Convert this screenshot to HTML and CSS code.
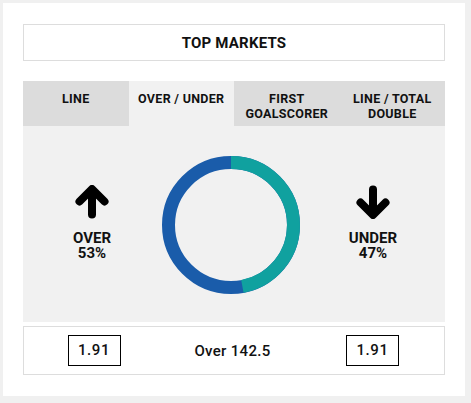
FILE: index.html
```html
<!DOCTYPE html>
<html lang="en">
<head>
  <meta charset="UTF-8" />
  <title>Top Markets</title>
  <link rel="stylesheet" href="styles.css">
</head>
<body>

  <div class="card">
    <div class="title">TOP MARKETS</div>

    <div class="tabs">
      <div class="tab">LINE</div>
      <div class="tab active">OVER / UNDER</div>
      <div class="tab">FIRST<br>GOALSCORER</div>
      <div class="tab">LINE / TOTAL<br>DOUBLE</div>
    </div>

    <div class="panel">
      <div class="side">
        <svg class="arrow" width="40" height="34" viewBox="0 0 40 34">
          <path d="M20 29.5 V8 M7.5 16.5 L20 4 L32.5 16.5" />
        </svg>
        <div class="label">OVER<br>53%</div>
      </div>

      <div class="chart">
        <svg width="138" height="138" viewBox="0 0 138 138">
          <circle cx="69" cy="69" r="62.5" fill="none" stroke="#1a5caa" stroke-width="13" />
          <!-- teal part: 47% from the top, clockwise -->
          <circle cx="69" cy="69" r="62.5" fill="none" stroke="#10a19f" stroke-width="13"
                  stroke-dasharray="184.6 400" transform="rotate(-90 69 69)" />
        </svg>
      </div>

      <div class="side">
        <svg class="arrow" width="40" height="34" viewBox="0 0 40 34">
          <path d="M20 4.5 V26 M7.5 17.5 L20 30 L32.5 17.5" />
        </svg>
        <div class="label">UNDER<br>47%</div>
      </div>
    </div>

    <div class="odds-row">
      <div class="cell"><span class="odd">1.91</span></div>
      <div class="cell line">Over 142.5</div>
      <div class="cell"><span class="odd">1.91</span></div>
    </div>
  </div>

</body>
</html>
```

FILE: styles.css
```css
body {
  margin: 0;
  background: #f0f0f0;
  font-family: Roboto, "Liberation Sans", sans-serif;
  color: #111;
}

.card {
  background: #fff;
  width: 462px;
  margin: 3px 0 0 3px;
  padding: 21px 20px 21px 20px;
  box-sizing: border-box;
}

.title {
  border: 1px solid #ddd;
  height: 37px;
  box-sizing: border-box;
  display: flex;
  align-items: center;
  justify-content: center;
  font-size: 15px;
  font-weight: 700;
  letter-spacing: 0.2px;
  margin-bottom: 20px;
}

.tabs {
  display: grid;
  grid-template-columns: repeat(4, 1fr);
  height: 45px;
}

.tab {
  background: #dcdcdc;
  text-align: center;
  font-size: 12.5px;
  font-weight: 700;
  line-height: 15px;
  padding-top: 10px;
  letter-spacing: 0.3px;
}

.tab.active {
  background: #f1f1f1;
}

.panel {
  background: #f1f1f1;
  display: grid;
  grid-template-columns: 138px 140px 1fr;
  padding: 30px 0 28px;
  margin-bottom: 4px;
}

.side {
  display: flex;
  flex-direction: column;
  align-items: center;
  justify-content: center;
  padding-bottom: 4px;
}

.arrow path {
  fill: none;
  stroke: #000;
  stroke-width: 8;
  stroke-linecap: round;
  stroke-linejoin: round;
}

.label {
  margin-top: 12px;
  text-align: center;
  font-size: 15px;
  font-weight: 700;
  line-height: 15px;
}

.chart {
  display: flex;
  justify-content: center;
}

.chart svg {
  display: block;
}

.odds-row {
  border: 1px solid #ddd;
  height: 49px;
  box-sizing: border-box;
  display: grid;
  grid-template-columns: 140px 1fr 143px;
  align-items: center;
}

.cell {
  text-align: center;
}

.odd {
  display: inline-block;
  width: 53px;
  height: 31px;
  box-sizing: border-box;
  border: 1px solid #000;
  line-height: 29px;
  font-size: 15px;
  letter-spacing: 0.6px;
  font-weight: 500;
}

.line {
  font-size: 15px;
  font-weight: 500;
  letter-spacing: 0.3px;
}
```
